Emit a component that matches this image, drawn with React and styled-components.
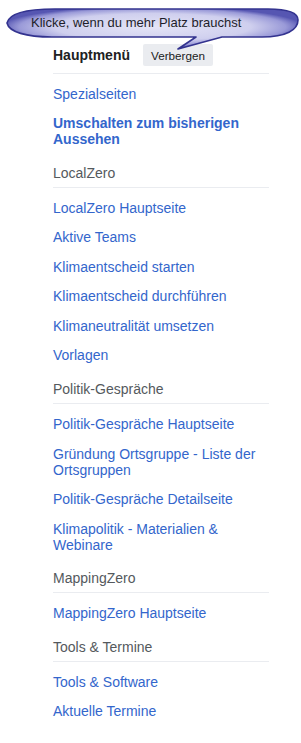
import React from 'react';
import styled, {createGlobalStyle} from 'styled-components';

const GlobalStyle = createGlobalStyle`
  body {
    margin: 0;
    background: #fff;
    font-family: "Liberation Sans", Arial, sans-serif;
  }
`;

const Page = styled.div`
  position: relative;
  width: 301px;
  height: 743px;
  background: #fff;
  overflow: hidden;
`;

const Menu = styled.nav`
  width: 216px;
  padding: 44px 0 0 53px;
  font-size: 14px;
`;

const MenuHeader = styled.div`
  display: flex;
  align-items: center;
  gap: 13px;
  padding-bottom: 7px;
  border-bottom: 1px solid #eaecf0;
`;

const Title = styled.span`
  font-weight: bold;
  color: #202122;
  line-height: 22px;
`;

const HideButton = styled.button`
  height: 22px;
  padding: 0 8px;
  border: none;
  border-radius: 2px;
  background: #eaecf0;
  color: #202122;
  font-family: "Liberation Sans", Arial, sans-serif;
  font-size: 11.7px;
  cursor: pointer;
`;

const Section = styled.div``;

const Heading = styled.div`
  margin-top: 11px;
  padding-bottom: 6px;
  line-height: 16px;
  color: #54595d;
  border-bottom: 1px solid #eaecf0;
`;

const List = styled.ul`
  list-style: none;
  margin: 0;
  padding: 5.1px 0 0;
`;

const Item = styled.li`
  padding: 6.75px 0;
  line-height: 16px;
`;

const Link = styled.a`
  color: #3366cc;
  text-decoration: none;
  font-weight: ${p => (p.$bold ? 'bold' : 'normal')};
`;

const Bubble = styled.div`
  position: absolute;
  left: 0;
  top: 0;
  width: 301px;
  height: 52px;
`;

const BubbleText = styled.span`
  position: absolute;
  left: 31px;
  top: 15px;
  font-size: 13px;
  line-height: 16px;
  color: #1e1e2a;
  white-space: nowrap;
`;

const sections = [
  {
    items: [{label: 'Spezialseiten'}, {label: 'Umschalten zum bisherigen Aussehen', bold: true}],
  },
  {
    heading: 'LocalZero',
    items: [
      {label: 'LocalZero Hauptseite'},
      {label: 'Aktive Teams'},
      {label: 'Klimaentscheid starten'},
      {label: 'Klimaentscheid durchführen'},
      {label: 'Klimaneutralität umsetzen'},
      {label: 'Vorlagen'},
    ],
  },
  {
    heading: 'Politik-Gespräche',
    items: [
      {label: 'Politik-Gespräche Hauptseite'},
      {label: 'Gründung Ortsgruppe - Liste der Ortsgruppen'},
      {label: 'Politik-Gespräche Detailseite'},
      {label: 'Klimapolitik - Materialien & Webinare'},
    ],
  },
  {
    heading: 'MappingZero',
    items: [{label: 'MappingZero Hauptseite'}],
  },
  {
    heading: 'Tools & Termine',
    items: [{label: 'Tools & Software'}, {label: 'Aktuelle Termine'}],
  },
];

const SpeechBubble = () => (
  <Bubble>
    <svg width="301" height="52" viewBox="0 0 301 52">
      <defs>
        <radialGradient id="bubbleFill" cx="50%" cy="45%" r="52%">
          <stop offset="0%" stopColor="#e4e4f6" />
          <stop offset="65%" stopColor="#cfcfee" />
          <stop offset="88%" stopColor="#9a9ad8" />
          <stop offset="100%" stopColor="#5656b2" />
        </radialGradient>
      </defs>
      <path
        d="M7 23 C9 13 28 9 55 9 L268 9 C288 9 298 13 298 20 C298 30 286 37 262 37 L222 37 L178 49 L196 37 L52 37 C26 37 9 32 7 23 Z"
        fill="url(#bubbleFill)"
        stroke="#33338f"
        strokeWidth="1.6"
        strokeLinejoin="round"
      />
    </svg>
    <BubbleText>Klicke, wenn du mehr Platz brauchst</BubbleText>
  </Bubble>
);

const App = () => (
  <Page>
    <GlobalStyle />
    <Menu>
      <MenuHeader>
        <Title>Hauptmenü</Title>
        <HideButton>Verbergen</HideButton>
      </MenuHeader>
      {sections.map((section, i) => (
        <Section key={i}>
          {section.heading && <Heading>{section.heading}</Heading>}
          <List>
            {section.items.map(item => (
              <Item key={item.label}>
                <Link href="#" $bold={item.bold}>
                  {item.label}
                </Link>
              </Item>
            ))}
          </List>
        </Section>
      ))}
    </Menu>
    <SpeechBubble />
  </Page>
);

export default App;
